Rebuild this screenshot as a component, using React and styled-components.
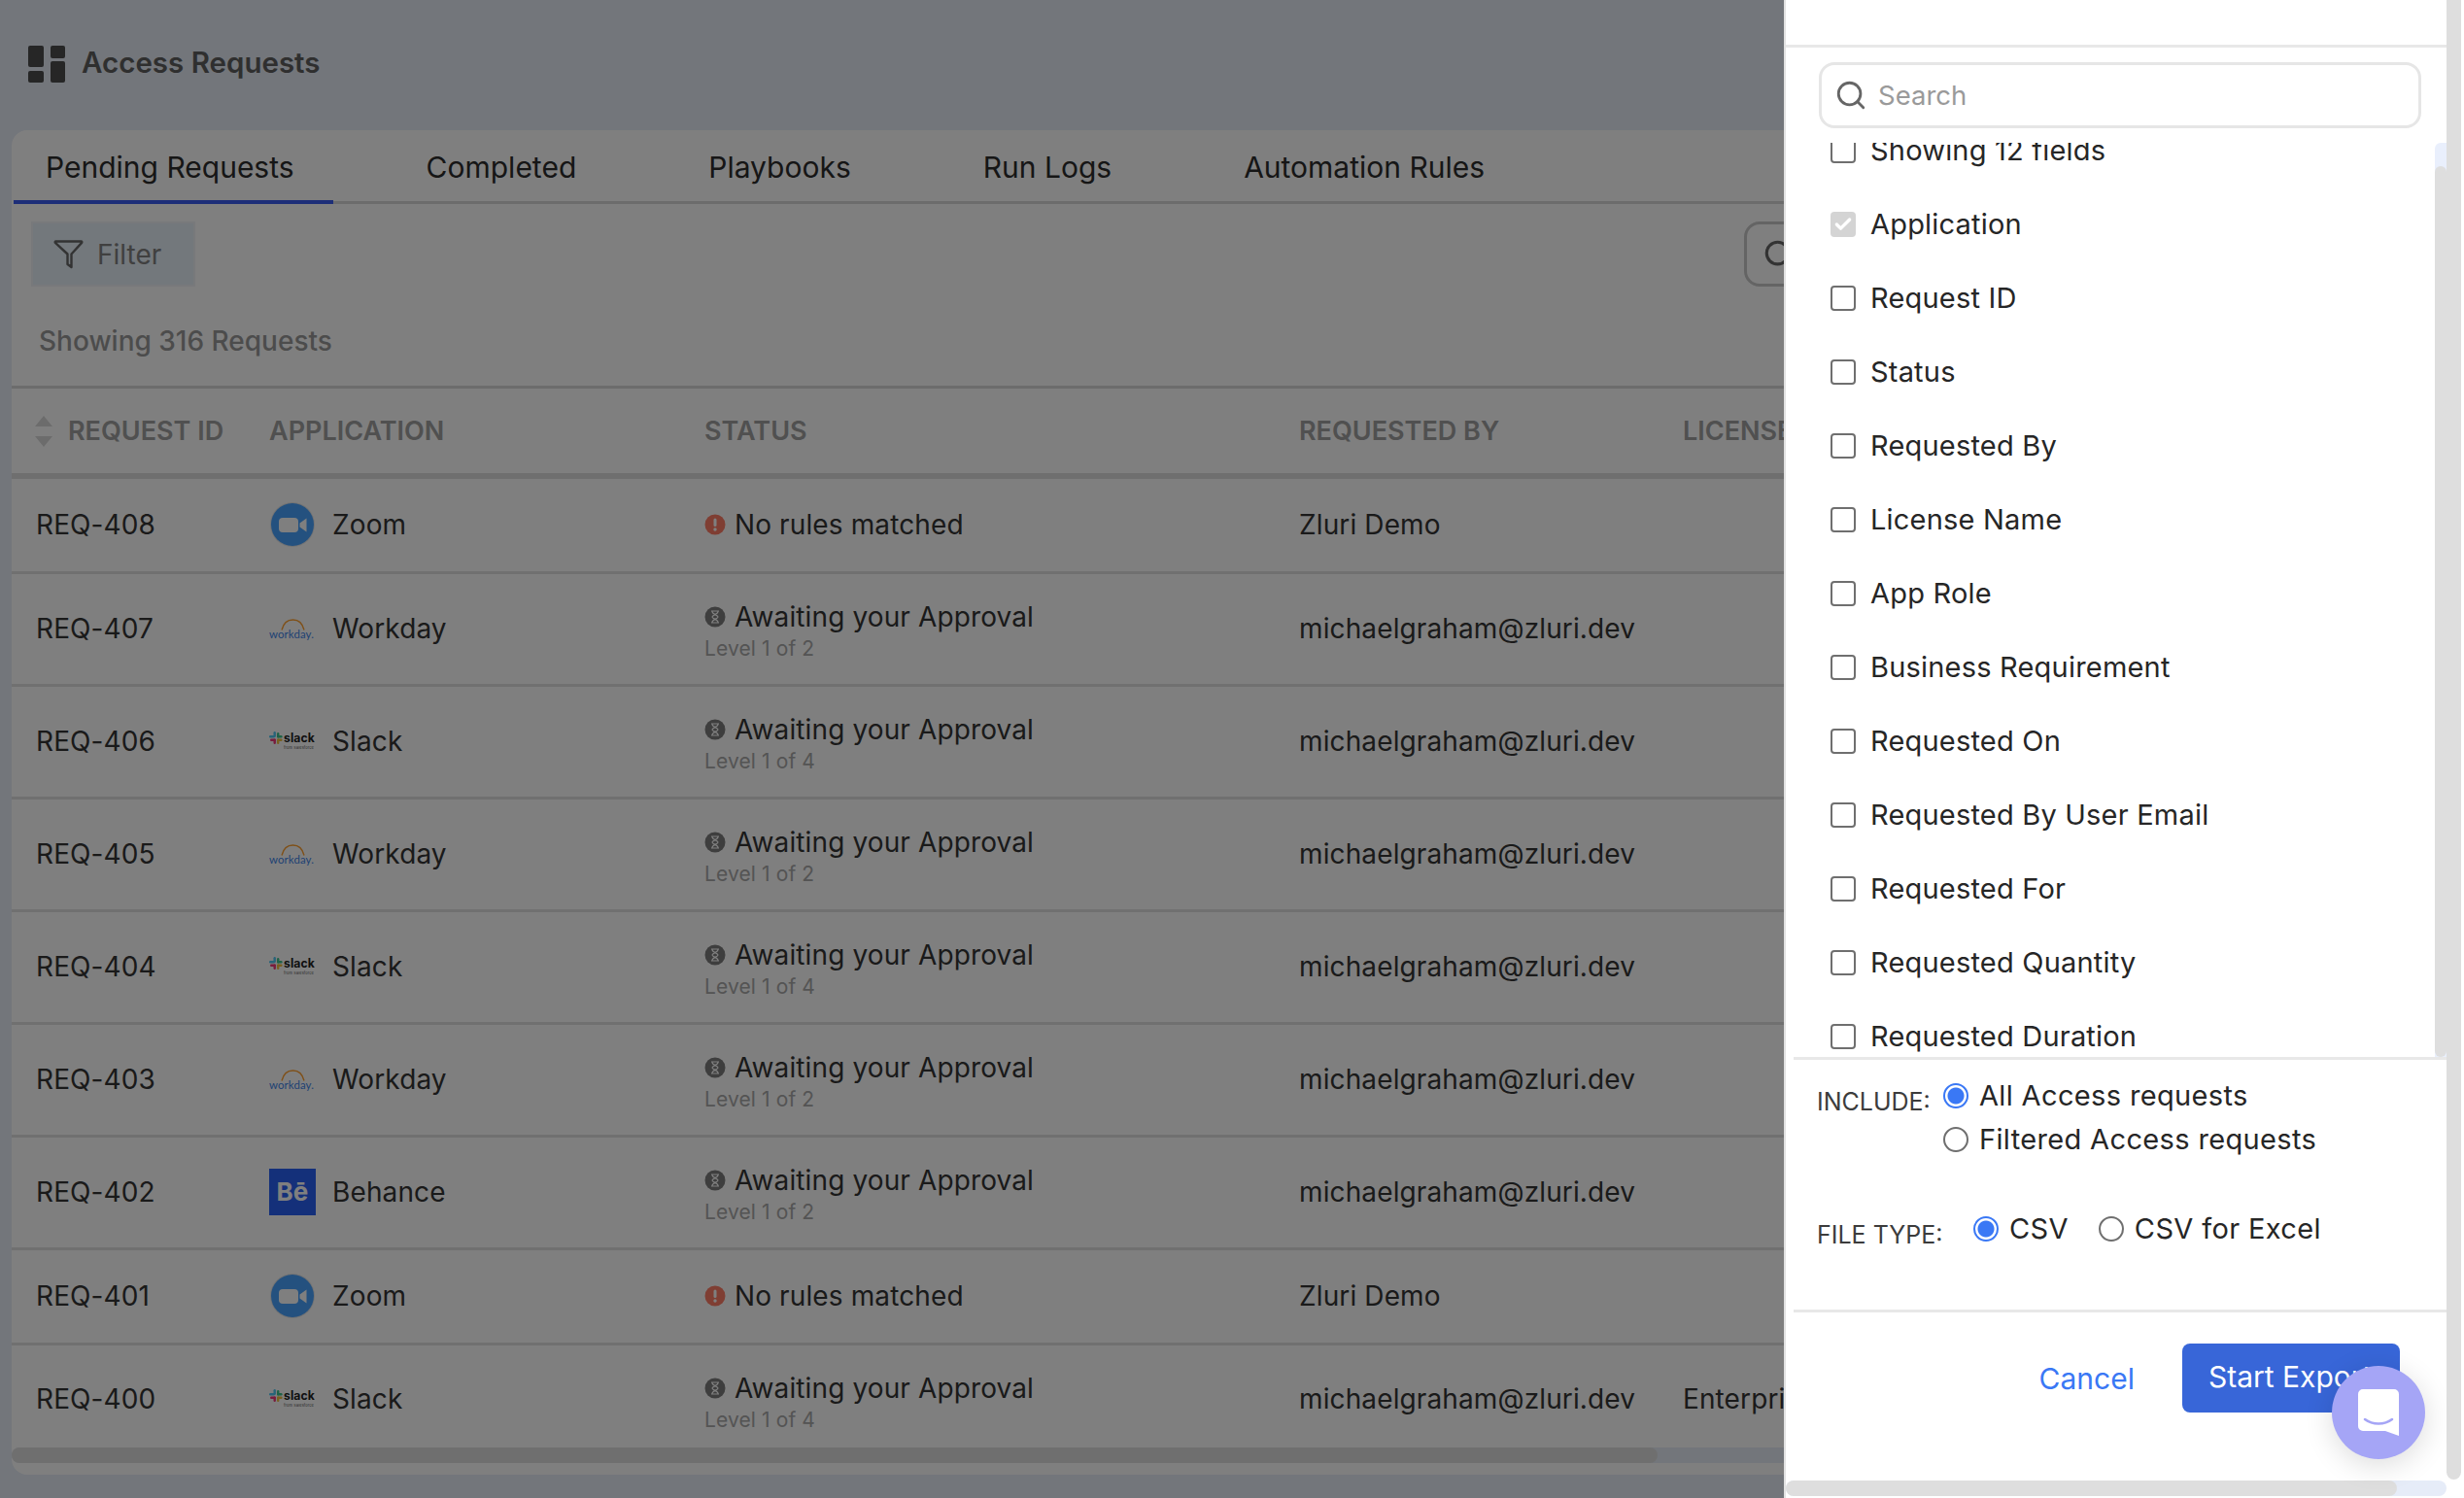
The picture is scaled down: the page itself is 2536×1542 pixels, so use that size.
import React from 'react';
import styled, { createGlobalStyle } from 'styled-components';
import { Search, Check } from 'lucide-react';

const GlobalStyle = createGlobalStyle`
  html, body {
    margin: 0;
    padding: 0;
    width: 2536px;
    height: 1542px;
    overflow: hidden;
    background: #e6ecf6;
    font-family: Inter, "Noto Sans", sans-serif;
  }
  * { box-sizing: border-box; }
`;

const Page = styled.div`
  position: relative;
  width: 2536px;
  height: 1542px;
  overflow: hidden;
  background: #e6ecf6;
`;

const TopHeader = styled.header`
  display: flex;
  align-items: center;
  gap: 17px;
  height: 134px;
  padding: 0 0 3px 29px;
`;

const PageTitle = styled.h1`
  margin: 0 0 3px;
  font-size: 29.5px;
  font-weight: 600;
  color: #5e5e5e;
`;

const Card = styled.section`
  margin-left: 12px;
  width: 2512px;
  height: 1384px;
  background: #fff;
  border-radius: 16px 0 0 16px;
  overflow: hidden;
`;

const Tabs = styled.nav`
  display: flex;
  height: 76px;
  margin-left: 2px;
  border-bottom: 3px solid #d8d8d8;
`;

const Tab = styled.div`
  height: 76px;
  padding: 20px 40px 0 33px;
  margin-right: 63px;
  font-size: 30px;
  white-space: nowrap;
  color: #2c2c2c;
  border-bottom: 4px solid ${(p) => (p.$active ? '#3a5cf0' : 'transparent')};
`;

const Toolbar = styled.div`
  display: flex;
  justify-content: space-between;
  align-items: center;
  height: 85px;
  padding: 18px 0 0 20px;
`;

const FilterButton = styled.div`
  display: flex;
  align-items: center;
  gap: 13px;
  width: 169px;
  height: 67px;
  padding-left: 21px;
  background: #e6f0f8;
  border: 2px solid #f0f3f6;
  font-size: 28px;
  color: #808080;
`;

const SearchStub = styled.div`
  display: flex;
  align-items: center;
  width: 300px;
  height: 67px;
  margin-right: 429px;
  padding-left: 16px;
  border: 3px solid #c8c8c8;
  border-radius: 16px;
  color: #666;
`;

const Showing = styled.div`
  height: 105px;
  padding: 39px 0 0 28px;
  font-size: 28px;
  font-weight: 500;
  color: #999;
  border-bottom: 3px solid #d8d8d8;
`;

const Columns = '265px 448px 612px 395px 500px';

const HeadRow = styled.div`
  display: grid;
  grid-template-columns: ${Columns};
  align-items: center;
  height: 93px;
  font-size: 27px;
  font-weight: 600;
  color: #a0a0a0;
  border-bottom: 6px solid #dedede;
`;

const HeadFirst = styled.div`
  display: flex;
  align-items: center;
  gap: 16px;
  padding-left: 24px;
`;

const SortArrows = styled.div`
  display: flex;
  flex-direction: column;
  gap: 10px;
`;

const Arrow = styled.div`
  width: 0;
  height: 0;
  border-left: 9px solid transparent;
  border-right: 9px solid transparent;
  ${(p) => (p.$up ? 'border-bottom' : 'border-top')}: 11px solid #d8d8d8;
`;

const RowsArea = styled.div`
  display: flex;
  flex-direction: column;
  height: 997px;
  overflow: hidden;
`;

const Row = styled.div`
  display: grid;
  grid-template-columns: ${Columns};
  align-items: center;
  flex: 0 0 ${(p) => (p.$last ? 112 : p.$tall ? 116 : 98)}px;
  padding-bottom: 2px;
  font-size: 28px;
  letter-spacing: 0.12px;
  color: #343434;
  border-bottom: ${(p) => (p.$last ? 'none' : '3px solid #e0e0e0')};
`;

const IdCell = styled.div`
  padding-left: 25px;
`;

const AppCell = styled.div`
  display: flex;
  align-items: center;
  gap: 17px;
`;

const LogoBox = styled.div`
  display: flex;
  align-items: center;
  justify-content: center;
  flex: 0 0 48px;
  width: 48px;
  height: 48px;
`;

const BehanceBox = styled(LogoBox)`
  background: #2860f4;
  color: #fff;
  font-size: 26px;
  font-weight: 700;
`;

const StatusBlock = styled.div`
  padding-top: ${(p) => (p.$tall ? 5 : 0)}px;
`;

const StatusLine = styled.div`
  display: flex;
  align-items: center;
  gap: 9px;
`;

const StatusSub = styled.div`
  margin-top: 3px;
  font-size: 21px;
  color: #a8a8a8;
`;

const TableScroll = styled.div`
  height: 16px;
  background: #e6ecf6;
  border-radius: 8px;
`;

const TableThumb = styled.div`
  width: 1694px;
  height: 16px;
  background: #dedede;
  border-radius: 8px;
`;

const Scrim = styled.div`
  position: absolute;
  inset: 0;
  background: rgba(0, 0, 0, 0.5);
`;

const Drawer = styled.aside`
  position: absolute;
  top: 0;
  right: 0;
  width: 700px;
  height: 1542px;
  display: flex;
  flex-direction: column;
  background: #fff;
  border-left: 2px solid #e2e2e2;
`;

const DrawerBody = styled.div`
  display: flex;
  height: 1524px;
`;

const DrawerMain = styled.div`
  display: flex;
  flex-direction: column;
  width: 680px;
`;

const DrawerBar = styled.div`
  width: 15px;
  height: 1523px;
  background: #dedede;
  border-radius: 0 0 8px 8px;
`;

const DrawerTop = styled.div`
  flex: 0 0 49px;
  border-bottom: 3px solid #e8e8e8;
`;

const SearchBox = styled.label`
  display: flex;
  align-items: center;
  gap: 11px;
  flex: 0 0 68px;
  width: 620px;
  margin: 15px 0 15px 34px;
  padding-left: 13px;
  border: 3px solid #e6e6e6;
  border-radius: 16px;
  color: #666;
`;

const SearchInput = styled.input`
  border: 0;
  outline: 0;
  width: 400px;
  padding: 0;
  font: 400 27.5px Inter, "Noto Sans", sans-serif;
  &::placeholder {
    color: #9a9a9a;
    opacity: 1;
  }
`;

const FieldArea = styled.div`
  display: flex;
  flex: 0 0 944px;
  margin-left: 8px;
  border-bottom: 3px solid #e8e8e8;
`;

const FieldList = styled.div`
  flex: 1;
  height: 941px;
  padding-left: 38px;
  overflow: hidden;
`;

const FieldItems = styled.div`
  margin-top: -30px;
`;

const Field = styled.div`
  display: flex;
  align-items: center;
  gap: 15px;
  height: 76px;
  font-size: 29px;
  letter-spacing: 0.2px;
  color: #262626;
`;

const FieldText = styled.span`
  margin-top: -2px;
`;

const Box = styled.span`
  display: flex;
  align-items: center;
  justify-content: center;
  width: 26px;
  height: 26px;
  border-radius: 4px;
  border: ${(p) => (p.$checked ? '0' : '2px solid #6f6f6f')};
  background: ${(p) => (p.$checked ? '#d4d4d4' : '#fff')};
  color: #fff;
`;

const ListTrack = styled.div`
  width: 12px;
  height: 941px;
  padding-top: 24px;
  background: #e9effc;
  border-radius: 6px 0 0 0;
`;

const ListThumb = styled.div`
  height: 917px;
  background: #dedede;
  border-radius: 6px;
`;

const Options = styled.div`
  flex: 0 0 260px;
  padding: 14px 0 0 24px;
  border-bottom: 3px solid #e8e8e8;
  width: 672px;
  margin-left: 8px;
`;

const OptionRow = styled.div`
  display: flex;
  margin-bottom: ${(p) => p.$gap || 0}px;
`;

const OptionLabel = styled.div`
  flex: 0 0 ${(p) => p.$width}px;
  padding-top: 14px;
  font-size: 25px;
  white-space: nowrap;
  color: #3c3c3c;
`;

const Radio = styled.label`
  display: flex;
  align-items: center;
  gap: 11px;
  height: 45px;
  font-size: 29px;
  letter-spacing: 0.35px;
  color: #262626;
`;

const RadioDot = styled.input.attrs({ type: 'radio', readOnly: true })`
  appearance: none;
  flex: 0 0 26px;
  width: 26px;
  height: 26px;
  margin: 0;
  border-radius: 50%;
  border: 2px solid #6f6f6f;
  background: #fff;
  &:checked {
    border-color: #3a78f5;
    background: radial-gradient(circle, #3a78f5 0 8px, #fff 9px);
  }
`;

const InlineRadios = styled.div`
  display: flex;
  gap: 31px;
`;

const Footer = styled.div`
  display: flex;
  justify-content: flex-end;
  align-items: center;
  gap: 49px;
  padding: 32px 48px 0 0;
`;

const CancelLink = styled.div`
  font-size: 30px;
  color: #3a78f5;
`;

const ExportButton = styled.div`
  width: 224px;
  height: 71px;
  padding-left: 27px;
  line-height: 69px;
  font-size: 30px;
  color: #fff;
  white-space: nowrap;
  overflow: hidden;
  background: #3866d8;
  border-radius: 8px;
`;

const HScroll = styled.div`
  width: 680px;
  height: 16px;
  background: #e6ecf8;
  border-radius: 8px;
`;

const HThumb = styled.div`
  width: 629px;
  height: 16px;
  background: #dedede;
  border-radius: 8px;
`;

const ChatBubble = styled.div`
  position: absolute;
  right: 40px;
  bottom: 40px;
  display: flex;
  align-items: center;
  justify-content: center;
  width: 96px;
  height: 96px;
  border-radius: 50%;
  background: #a5a5f6;
  box-shadow: 0 6px 30px rgba(0, 0, 0, 0.14);
`;

const LogoIcon = () => (
  <svg width="38" height="38" viewBox="0 0 38 38" fill="#4c4c4c">
    <rect x="0" y="0" width="16" height="22" rx="2" />
    <rect x="0" y="26" width="16" height="12" rx="2" />
    <rect x="23" y="0" width="15" height="13" rx="2" />
    <rect x="23" y="16" width="15" height="22" rx="2" />
  </svg>
);

const FunnelIcon = () => (
  <svg width="32" height="32" viewBox="0 0 32 32" fill="none" stroke="#666" strokeWidth="2.400" strokeLinejoin="round">
    <path d="M2.500 2.500h26c.8 0 1 .8.6 1.400L18.500 15.500V29l-4-3V15.500L1.900 3.900C1.500 3.300 1.700 2.500 2.500 2.500z" />
  </svg>
);

const ZoomLogo = () => (
  <svg width="46" height="46" viewBox="0 0 46 46">
    <circle cx="23" cy="23" r="23" fill="#e8e8e8" />
    <circle cx="23" cy="23" r="22" fill="#48a2ff" />
    <rect x="9" y="16" width="20" height="15" rx="4" fill="#fff" />
    <path d="M30.500 21.500l7-5v14l-7-5z" fill="#fff" />
  </svg>
);

const WorkdayLogo = () => (
  <svg width="48" height="24" viewBox="0 0 48 24">
    <path d="M13 13.500C15 5 20 3 24.500 3S34 5 36 13.500" fill="none" stroke="#ffa030" strokeWidth="1.400" />
    <text x="0" y="22" fontFamily="Lato, sans-serif" fontSize="12" textLength="46" lengthAdjust="spacingAndGlyphs" fill="#3e84e8">workday.</text>
  </svg>
);

const SlackLogo = () => (
  <svg width="48" height="20" viewBox="0 0 48 20">
    <rect x="4.500" y="0" width="2.400" height="6" rx="1.200" fill="#50c8f2" />
    <rect x="0" y="4" width="6" height="2.400" rx="1.200" fill="#50c8f2" />
    <rect x="8" y="1" width="2.400" height="5.400" rx="1.200" fill="#3ec48c" />
    <rect x="8" y="4" width="5.600" height="2.400" rx="1.200" fill="#3ec48c" />
    <rect x="1" y="7.600" width="5.800" height="2.400" rx="1.200" fill="#f0387a" />
    <rect x="4.500" y="7.600" width="2.400" height="5.400" rx="1.200" fill="#f0387a" />
    <rect x="8" y="7.600" width="5.600" height="2.400" rx="1.200" fill="#f0c040" />
    <rect x="8" y="7.600" width="2.400" height="5.400" rx="1.200" fill="#f0c040" />
    <text x="15" y="11" fontFamily="Inter, sans-serif" fontWeight="700" fontSize="12.500" textLength="32" lengthAdjust="spacingAndGlyphs" fill="#222">slack</text>
    <text x="15" y="18" fontFamily="Inter, sans-serif" fontSize="4" textLength="31" lengthAdjust="spacingAndGlyphs" fill="#555">from Salesforce</text>
  </svg>
);

const AlertIcon = () => (
  <svg width="22" height="22" viewBox="0 0 22 22" style={{ flex: '0 0 22px' }}>
    <circle cx="11" cy="11" r="10.500" fill="#ff7c66" />
    <rect x="9.500" y="4.500" width="3" height="8.500" rx="1.500" fill="#fff" />
    <circle cx="11" cy="16" r="1.700" fill="#fff" />
  </svg>
);

const HourglassIcon = () => (
  <svg width="22" height="22" viewBox="0 0 22 22" style={{ flex: '0 0 22px' }}>
    <circle cx="11" cy="11" r="10.500" fill="#7c7c7c" />
    <path d="M7 5h8M7 17h8M8 5.500c0 3 6 3.500 6 5.500s-6 2.500-6 5.500M14 5.500c0 3-6 3.500-6 5.500s6 2.500 6 5.500" fill="none" stroke="#fff" strokeWidth="1.200" />
  </svg>
);

const ChatIcon = () => (
  <svg width="42" height="48" viewBox="0 0 42 48">
    <path d="M5 0h32a5 5 0 0 1 5 5v43l-14-5H5a5 5 0 0 1-5-5V5a5 5 0 0 1 5-5z" fill="#fff" />
    <path d="M7 31c8 6 20 6 28 0" fill="none" stroke="#a5a5f6" strokeWidth="2.600" strokeLinecap="round" />
  </svg>
);

const appLogo = (app) => {
  if (app === 'Zoom') return <LogoBox><ZoomLogo /></LogoBox>;
  if (app === 'Workday') return <LogoBox><WorkdayLogo /></LogoBox>;
  if (app === 'Slack') return <LogoBox><SlackLogo /></LogoBox>;
  return <BehanceBox>Bē</BehanceBox>;
};

const requests = [
  { id: 'REQ-408', app: 'Zoom', by: 'Zluri Demo' },
  { id: 'REQ-407', app: 'Workday', level: 'Level 1 of 2', by: 'michaelgraham@zluri.dev' },
  { id: 'REQ-406', app: 'Slack', level: 'Level 1 of 4', by: 'michaelgraham@zluri.dev' },
  { id: 'REQ-405', app: 'Workday', level: 'Level 1 of 2', by: 'michaelgraham@zluri.dev' },
  { id: 'REQ-404', app: 'Slack', level: 'Level 1 of 4', by: 'michaelgraham@zluri.dev' },
  { id: 'REQ-403', app: 'Workday', level: 'Level 1 of 2', by: 'michaelgraham@zluri.dev' },
  { id: 'REQ-402', app: 'Behance', level: 'Level 1 of 2', by: 'michaelgraham@zluri.dev' },
  { id: 'REQ-401', app: 'Zoom', by: 'Zluri Demo' },
  { id: 'REQ-400', app: 'Slack', level: 'Level 1 of 4', by: 'michaelgraham@zluri.dev', license: 'Enterprise' },
];

const fields = [
  'Showing 12 fields', 'Application', 'Request ID', 'Status', 'Requested By', 'License Name', 'App Role',
  'Business Requirement', 'Requested On', 'Requested By User Email', 'Requested For', 'Requested Quantity',
  'Requested Duration',
];

const tabs = ['Pending Requests', 'Completed', 'Playbooks', 'Run Logs', 'Automation Rules'];

export default function App() {
  return (
    <Page>
      <GlobalStyle />
      <TopHeader>
        <LogoIcon />
        <PageTitle>Access Requests</PageTitle>
      </TopHeader>
      <Card>
        <Tabs>
          {tabs.map((t, i) => <Tab key={t} $active={i === 0}>{t}</Tab>)}
        </Tabs>
        <Toolbar>
          <FilterButton><FunnelIcon />Filter</FilterButton>
          <SearchStub><Search size={34} strokeWidth={2.2} /></SearchStub>
        </Toolbar>
        <Showing>Showing 316 Requests</Showing>
        <HeadRow>
          <HeadFirst>
            <SortArrows><Arrow $up /><Arrow /></SortArrows>
            REQUEST ID
          </HeadFirst>
          <div>APPLICATION</div>
          <div>STATUS</div>
          <div>REQUESTED BY</div>
          <div>LICENSE NAME</div>
        </HeadRow>
        <RowsArea>
          {requests.map((r, i) => (
            <Row key={r.id} $tall={!!r.level} $last={i === requests.length - 1}>
              <IdCell>{r.id}</IdCell>
              <AppCell>{appLogo(r.app)}{r.app}</AppCell>
              <StatusBlock $tall={!!r.level}>
                <StatusLine>
                  {r.level ? <HourglassIcon /> : <AlertIcon />}
                  {r.level ? 'Awaiting your Approval' : 'No rules matched'}
                </StatusLine>
                {r.level && <StatusSub>{r.level}</StatusSub>}
              </StatusBlock>
              <div>{r.by}</div>
              <div>{r.license}</div>
            </Row>
          ))}
        </RowsArea>
        <TableScroll><TableThumb /></TableScroll>
      </Card>
      <Scrim />
      <Drawer>
        <DrawerBody>
          <DrawerMain>
            <DrawerTop />
            <SearchBox>
              <Search size={34} strokeWidth={2} />
              <SearchInput placeholder="Search" />
            </SearchBox>
            <FieldArea>
              <FieldList>
                <FieldItems>
                  {fields.map((f) => (
                    <Field key={f}>
                      <Box $checked={f === 'Application'}>
                        {f === 'Application' && <Check size={20} strokeWidth={4} />}
                      </Box>
                      <FieldText>{f}</FieldText>
                    </Field>
                  ))}
                </FieldItems>
              </FieldList>
              <ListTrack><ListThumb /></ListTrack>
            </FieldArea>
            <Options>
              <OptionRow $gap={47}>
                <OptionLabel $width={130}>INCLUDE:</OptionLabel>
                <div>
                  <Radio><RadioDot name="include" defaultChecked />All Access requests</Radio>
                  <Radio><RadioDot name="include" />Filtered Access requests</Radio>
                </div>
              </OptionRow>
              <OptionRow>
                <OptionLabel $width={161}>FILE TYPE:</OptionLabel>
                <InlineRadios>
                  <Radio><RadioDot name="filetype" defaultChecked />CSV</Radio>
                  <Radio><RadioDot name="filetype" />CSV for Excel</Radio>
                </InlineRadios>
              </OptionRow>
            </Options>
            <Footer>
              <CancelLink>Cancel</CancelLink>
              <ExportButton>Start Export</ExportButton>
            </Footer>
          </DrawerMain>
          <DrawerBar />
        </DrawerBody>
        <HScroll><HThumb /></HScroll>
      </Drawer>
      <ChatBubble><ChatIcon /></ChatBubble>
    </Page>
  );
}
